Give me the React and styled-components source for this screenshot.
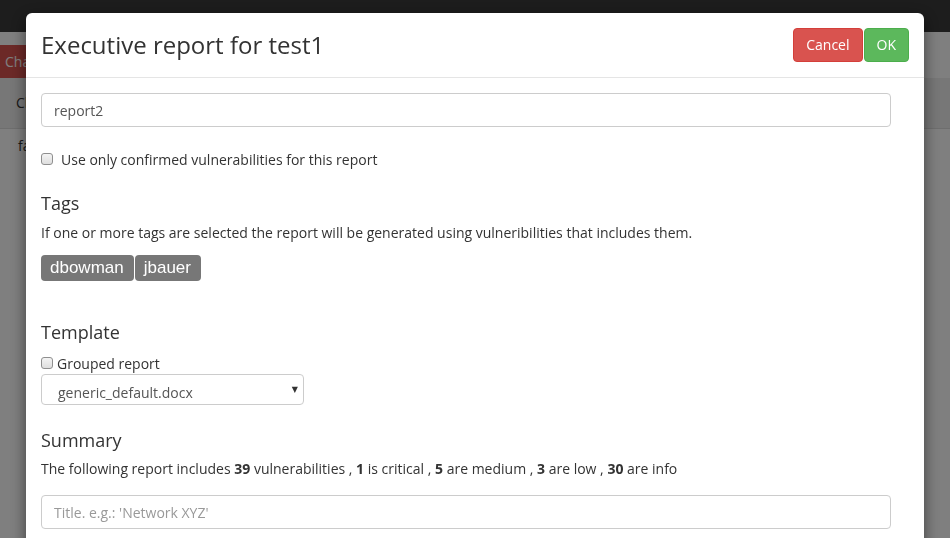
import styled, { createGlobalStyle } from 'styled-components';

const GlobalStyle = createGlobalStyle`
  html, body {
    margin: 0;
    padding: 0;
    height: 100%;
    overflow: hidden;
  }
  body {
    font-family: 'Open Sans', 'DejaVu Sans', sans-serif;
    font-size: 14px;
    color: #333;
    background: #f5f5f5;
  }
`;

const App = () => {
  return (
    <>
      <GlobalStyle />
      <Page>
        <NavBar />
        <PageBody>
          <DangerButton>Cha</DangerButton>
          <TableHead>Cl</TableHead>
          <TableRow>fa</TableRow>
        </PageBody>
      </Page>
      <Backdrop />
      <Modal>
        <Header>
          <Title>Executive report for test1</Title>
          <Actions>
            <Button $kind='danger'>Cancel</Button>
            <Button $kind='success'>OK</Button>
          </Actions>
        </Header>
        <Body>
          <TextInput defaultValue='report2' />
          <CheckRow>
            <Check type='checkbox' />
            <span>Use only confirmed vulnerabilities for this report</span>
          </CheckRow>

          <Heading>Tags</Heading>
          <Help>
            If one or more tags are selected the report will be generated using
            vulneribilities that includes them.
          </Help>
          <TagList>
            <Tag>dbowman</Tag>
            <Tag>jbauer</Tag>
          </TagList>

          <Heading $top={41} $bottom={11}>Template</Heading>
          <CheckRow $tight>
            <Check type='checkbox' />
            <span>Grouped report</span>
          </CheckRow>
          <SelectBox>
            <SelectText>generic_default.docx</SelectText>
            <Caret>▼</Caret>
          </SelectBox>

          <Heading $top={25} $bottom={9}>Summary</Heading>
          <Help $bottom={16}>
            The following report includes <b>39</b> vulnerabilities , <b>1</b> is
            critical , <b>5</b> are medium , <b>3</b> are low , <b>30</b> are info
          </Help>
          <TextInput placeholder="Title. e.g.: 'Network XYZ'" />
        </Body>
      </Modal>
    </>
  );
};

const Page = styled.div`
  height: 100vh;
  display: flex;
  flex-direction: column;
`;

const NavBar = styled.div`
  height: 32px;
  background: #3a3a3a;
  flex-shrink: 0;
`;

const PageBody = styled.div`
  flex: 1;
  background: #fff;
  padding-top: 13px;
`;

const DangerButton = styled.div`
  width: 26px;
  height: 33px;
  overflow: hidden;
  white-space: nowrap;
  background: #d9534f;
  color: #fff;
  font-size: 14px;
  line-height: 33px;
  padding-left: 5px;
`;

const TableHead = styled.div`
  height: 50px;
  line-height: 50px;
  padding-left: 16px;
  background: #eee;
  border-bottom: 1px solid #ddd;
`;

const TableRow = styled.div`
  height: 34px;
  line-height: 34px;
  padding-left: 18px;
`;

const Backdrop = styled.div`
  position: fixed;
  inset: 0;
  background: rgba(0, 0, 0, 0.5);
`;

const Modal = styled.div`
  position: fixed;
  top: 13px;
  left: 26px;
  width: 898px;
  bottom: -40px;
  background: #fff;
  border-radius: 6px;
  box-shadow: 0 5px 15px rgba(0, 0, 0, 0.5);
`;

const Header = styled.div`
  display: flex;
  align-items: center;
  justify-content: space-between;
  height: 64px;
  padding: 0 15px;
  border-bottom: 1px solid #e5e5e5;
`;

const Title = styled.h4`
  margin: 0 0 1px;
  font-size: 24px;
  font-weight: 400;
  color: #333;
`;

const Actions = styled.div`
  display: flex;
  gap: 1px;
  margin-bottom: 1px;
`;

const Button = styled.button`
  height: 34px;
  padding: 0 12px;
  border: 1px solid ${(p) => (p.$kind === 'danger' ? '#d43f3a' : '#4cae4c')};
  border-radius: 4px;
  background: ${(p) => (p.$kind === 'danger' ? '#d9534f' : '#5cb85c')};
  color: #fff;
  font-family: 'Open Sans', sans-serif;
  font-size: 14px;
`;

const Body = styled.div`
  padding: 15px 15px;
  padding-right: 33px;
`;

const TextInput = styled.input`
  display: block;
  box-sizing: border-box;
  width: 100%;
  height: 34px;
  padding: 6px 12px;
  border: 1px solid #ccc;
  border-radius: 4px;
  font-family: 'Open Sans', sans-serif;
  font-size: 14px;
  color: #555;
  outline: none;
  &::placeholder {
    color: #999;
  }
`;

const CheckRow = styled.label`
  display: flex;
  align-items: center;
  gap: ${(p) => (p.$tight ? '4px' : '8px')};
  margin-top: ${(p) => (p.$tight ? '0' : '22px')};
  height: 20px;
`;

const Check = styled.input`
  appearance: none;
  box-sizing: border-box;
  margin: 0;
  width: 12px;
  height: 12px;
  border: 1px solid #8f8f8f;
  border-radius: 3px;
  background: linear-gradient(#f4f4f4, #dedede);
`;

const Heading = styled.h3`
  margin: ${(p) => p.$top || 24}px 0 ${(p) => p.$bottom || 10}px;
  font-size: 18px;
  font-weight: 400;
  line-height: 20px;
`;

const Help = styled.p`
  margin: 0 0 ${(p) => p.$bottom || 12}px;
  line-height: 20px;
  b {
    font-weight: 700;
  }
`;

const TagList = styled.div`
  display: flex;
  gap: 1px;
`;

const Tag = styled.span`
  height: 26px;
  line-height: 26px;
  padding: 0 10px 0 9px;
  background: #777;
  color: #fff;
  border-radius: 4px;
  font-family: 'Liberation Sans', Arial, sans-serif;
  font-size: 17px;
`;

const SelectBox = styled.div`
  position: relative;
  box-sizing: border-box;
  width: 263px;
  height: 31px;
  margin-top: 1px;
  border: 1px solid #ccc;
  border-radius: 4px;
  overflow: hidden;
`;

const SelectText = styled.div`
  padding: 8px 0 0 16px;
  font-size: 14px;
  line-height: 20px;
  color: #555;
`;

const Caret = styled.span`
  position: absolute;
  right: 5px;
  top: 8px;
  font-size: 8px;
  color: #333;
`;

export default App;
